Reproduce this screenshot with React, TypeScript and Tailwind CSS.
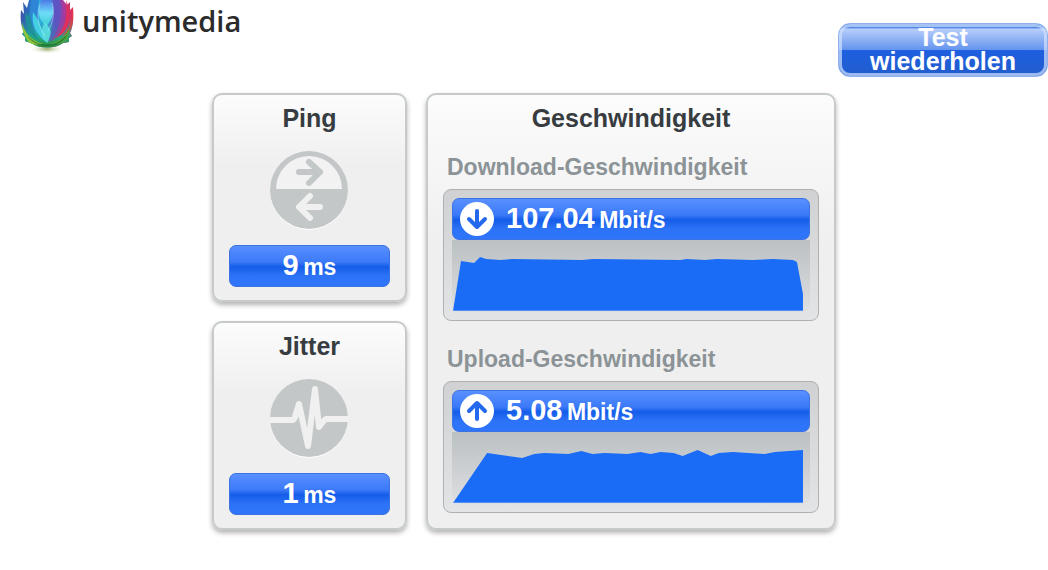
import { ReactNode } from "react";

const downloadPoints =
  "1,71 9,21 22,23 28,17 34,19 48,20 60,19 130,20 140,19 228,20 234,19 252,20 264,19 300,20 320,19 340,20 344,22 350,54 350,71";

const uploadPoints =
  "1,71 35,21 70,26 82,22 92,21 116,22 129,19 140,22 152,21 175,22 188,20 198,22 208,20 221,21 230,24 245,18 258,24 266,21 280,20 312,22 322,20 350,18 350,71";

function Logo() {
  return (
    <div className="flex items-start pl-5">
      <svg viewBox="0 0 56 54" className="h-[54px] w-14" aria-hidden="true">
        <defs>
          <linearGradient id="cup" x1="0" y1="0" x2="1" y2="0">
            <stop offset="0" stopColor="#3c55a8" />
            <stop offset="0.16" stopColor="#2b6cc0" />
            <stop offset="0.35" stopColor="#2fb2e0" />
            <stop offset="0.52" stopColor="#3f95e6" />
            <stop offset="0.66" stopColor="#6a4cc0" />
            <stop offset="0.82" stopColor="#a93a9c" />
            <stop offset="1" stopColor="#e8304a" />
          </linearGradient>
          <linearGradient id="base" x1="0" y1="0" x2="0" y2="1">
            <stop offset="0.3" stopColor="#1aa79b" stopOpacity="0" />
            <stop offset="0.75" stopColor="#1fae7c" stopOpacity="0.9" />
            <stop offset="1" stopColor="#2f8a2e" />
          </linearGradient>
          <linearGradient id="petal" x1="0" y1="0" x2="0" y2="1">
            <stop offset="0" stopColor="#4b7be8" />
            <stop offset="0.5" stopColor="#6fdcf8" />
            <stop offset="1" stopColor="#3ccfd0" />
          </linearGradient>
          <radialGradient id="shade">
            <stop offset="0" stopColor="#8fa860" />
            <stop offset="1" stopColor="#fff" stopOpacity="0" />
          </radialGradient>
        </defs>
        <ellipse cx="27" cy="49" rx="18" ry="5" fill="url(#shade)" />
        <path d="M1 10l3 4L3 2l4 6 2-8h34l4 5 3-3v8l3-3c1 12 0 20-3 26l2 3-3 2v4l-6 1c-8 6-24 6-32 0l-6-2v-4l-3-3 2-2C1 26 0 19 1 10z" fill="url(#cup)" />
        <path d="M1 10l3 4 3-6h40l3 2 3-3c1 12 0 20-3 26l2 3-3 2v4l-6 1c-8 6-24 6-32 0l-6-2v-4l-3-3 2-2C1 26 0 19 1 10z" fill="url(#base)" />
        <path d="M2 22c3 12 9 18 21 22-8 2-13 0-16-4l-4-8z" fill="#8cc63a" />
        <path d="M5 12c0 14 4 22 15 29C12 32 10 22 11 8l-3 8z" fill="#1f8f9c" />
        <path d="M12 0c-5 13-1 31 13 41C19 28 16 18 19 0z" fill="#2f86d6" />
        <path d="M13 12c-2 13 3 22 13 30-3-10-6-20-13-30z" fill="#45cfe2" />
        <path d="M21 0c-4 10-3 19 5 26 8-7 9-17 5-26z" fill="url(#petal)" />
        <path d="M25 22c-5 8-4 15 2 21 6-6 5-14-2-21z" fill="#62e3ea" opacity=".8" />
        <path d="M33 0c3 12 1 25-5 42 11-8 17-19 14-33L40 0z" fill="#5a55c4" opacity=".75" />
        <path d="M41 7c1 14-4 26-11 35 13-7 17-18 14-33z" fill="#9a3da6" opacity=".75" />
        <path d="M46 0c2 15 0 26-10 38 11-5 15-16 13-30z" fill="#df2f5d" />
        <path d="M52 9c1 12-2 20-10 27 9-3 12-12 10-27z" fill="#d94a3c" />
        <path d="M50 26c-3 9-9 14-20 18 9 1 15-2 18-6z" fill="#4ca83a" />
        <path d="M7 35c10 12 27 14 40 0-6 13-31 16-40 0z" fill="#155b38" opacity=".6" />
        <path d="M20 4c-4 12-2 22 5 32M32 3c3 10 1 19-4 28" fill="none" stroke="#c5f1fb" strokeWidth="1" opacity=".45" />
      </svg>
      <span className="pl-[6px] font-['Open_Sans'] text-[29px] leading-[42px] font-semibold text-[#2b2b2b]">
        unitymedia
      </span>
    </div>
  );
}

function Card({ title, children }: { title: string; children: ReactNode }) {
  return (
    <section className="rounded-[10px] border-2 border-[#c6caca] bg-linear-to-b from-[#fcfcfc] to-[#efefef] to-35% px-[15px] pt-[7px] pb-[13px] shadow-[0_3px_5px_rgba(0,0,0,0.3)]">
      <h2 className="text-center text-[25px] leading-8 font-bold text-[#373c40]">{title}</h2>
      {children}
    </section>
  );
}

function ValueBar({ value, unit, icon }: { value: string; unit: string; icon?: ReactNode }) {
  return (
    <div
      className={`flex h-[42px] items-center rounded-[7px] border border-[#3c72e2] bg-[linear-gradient(#5990ff_0%,#3b79f8_40%,#145de8_52%,#2d73f7_75%,#2f75fa_100%)] text-white ${
        icon ? "px-[7px]" : "justify-center"
      }`}
    >
      {icon}
      <p className={icon ? "pb-px pl-3 font-bold" : "pb-px font-bold"}>
        <span className="text-[29px] leading-10">{value}</span>{" "}
        <span className="text-[23px] leading-10">{unit}</span>
      </p>
    </div>
  );
}

function PingIcon() {
  return (
    <svg viewBox="0 0 80 80" className="size-20" aria-hidden="true">
      <circle cx="40" cy="41" r="39" fill="#fff" />
      <circle cx="40" cy="40" r="39" fill="#c3c7c8" />
      <path d="M7 39a33 33 0 0 1 66 0z" fill="#f2f2f2" />
      <g fill="none" strokeWidth="6" strokeLinecap="round" strokeLinejoin="round">
        <path d="M30 22h21M40 12l11 10-11 11" stroke="#c3c7c8" />
        <path d="M51 57H30M41 46L30 57l11 11" stroke="#f0f0f0" />
      </g>
    </svg>
  );
}

function JitterIcon() {
  return (
    <svg viewBox="0 0 80 80" className="size-20" aria-hidden="true">
      <circle cx="40" cy="41" r="39" fill="#fff" />
      <circle cx="40" cy="40" r="39" fill="#c3c7c8" />
      <path
        d="M0 42h23q2 0 3-3l4-13 9 42 7-57 4 38q5-7 7-8h23"
        fill="none"
        stroke="#f0f0f0"
        strokeWidth="6"
        strokeLinejoin="round"
      />
    </svg>
  );
}

function ArrowIcon({ up = false }: { up?: boolean }) {
  return (
    <svg viewBox="0 0 34 34" className="size-[34px]" aria-hidden="true">
      <circle cx="17" cy="17" r="17" fill="#fff" />
      <path
        d={up ? "M17 25V10M9 17l8-8 8 8" : "M17 9v15M9 17l8 8 8-8"}
        fill="none"
        stroke="#2468ed"
        strokeWidth="4"
        strokeLinecap="round"
        strokeLinejoin="round"
      />
    </svg>
  );
}

function SpeedPanel({ label, value, points, up }: { label: string; value: string; points: string; up?: boolean }) {
  return (
    <div>
      <h3 className="pl-1 text-[23px] leading-8 font-bold text-[#8b9397]">{label}</h3>
      <div className="mt-[6px] rounded-lg border border-[#aeb1b3] bg-linear-to-b from-[#cfd1d3] to-[#e3e4e6] p-2">
        <ValueBar value={value} unit="Mbit/s" icon={<ArrowIcon up={up} />} />
        <div className="rounded-b-lg bg-linear-to-b from-[#bbc0c3] to-[#dedfe1] pb-px">
          <svg viewBox="0 0 357 71" preserveAspectRatio="none" className="block h-[71px] w-full" aria-hidden="true">
            <polygon points={points} fill="#1a6bf6" />
            <path d="M1 71h349" stroke="#8db6fb" />
          </svg>
        </div>
      </div>
    </div>
  );
}

export default function App() {
  return (
    <div className="min-h-screen bg-white font-['Liberation_Sans',Arial,sans-serif]">
      <header className="flex items-start justify-between pb-4">
        <Logo />
        <button
          type="button"
          className="mt-[23px] h-[54px] w-[210px] rounded-[12px] border border-[#8fb0ea] bg-[linear-gradient(#3f79dd_0%,#3f79dd_6%,#b7cdfa_10%,#6494ee_50%,#1e5fe0_51%,#225dcc_100%)] px-5 pb-[2px] text-[25px] leading-6 font-bold text-white shadow-[inset_0_0_0_3px_rgba(210,226,255,0.7)]"
        >
          Test wiederholen
        </button>
      </header>

      <main className="mx-auto grid max-w-[624px] grid-cols-[195fr_410fr] gap-[19px]">
        <div className="flex flex-col gap-[19px]">
          <Card title="Ping">
            <div className="flex justify-center pt-4 pr-[2px] pb-[15px]">
              <PingIcon />
            </div>
            <ValueBar value="9" unit="ms" />
          </Card>
          <Card title="Jitter">
            <div className="flex justify-center pt-4 pr-[2px] pb-[15px]">
              <JitterIcon />
            </div>
            <ValueBar value="1" unit="ms" />
          </Card>
        </div>
        <Card title="Geschwindigkeit">
          <div className="flex flex-col gap-[22px] pt-[17px]">
            <SpeedPanel label="Download-Geschwindigkeit" value="107.04" points={downloadPoints} />
            <SpeedPanel label="Upload-Geschwindigkeit" value="5.08" points={uploadPoints} up />
          </div>
        </Card>
      </main>
    </div>
  );
}
